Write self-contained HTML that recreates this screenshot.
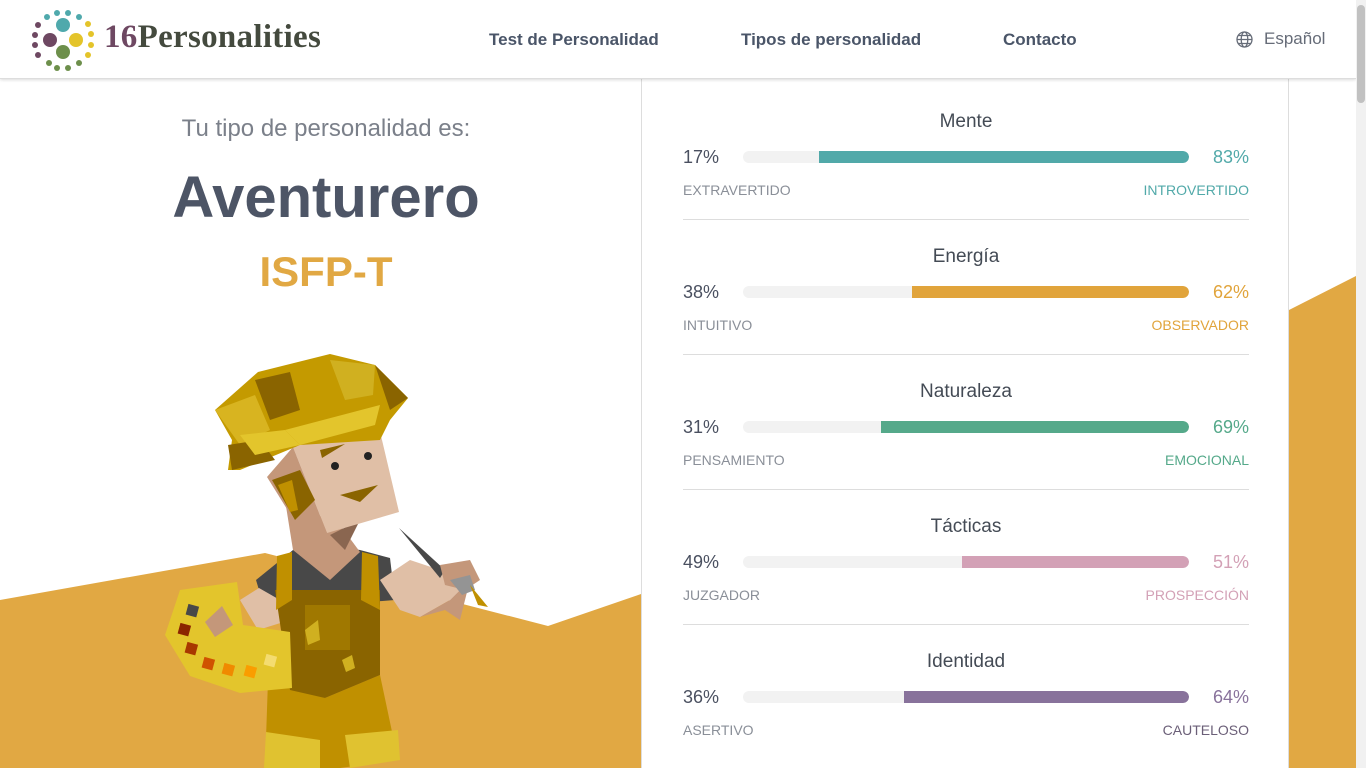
<!DOCTYPE html>
<html><head><meta charset="utf-8"><style>
*{margin:0;padding:0;box-sizing:border-box}
body{width:1366px;height:768px;overflow:hidden;background:#fff;font-family:"Liberation Sans",sans-serif;position:relative}
.hdr{position:absolute;left:0;top:0;width:1356px;height:79px;background:#fff;border-bottom:1px solid #ddd;box-shadow:0 1px 3px rgba(0,0,0,.15);z-index:5}
.nav{position:absolute;top:30px;font-size:17px;font-weight:bold;color:#4a5568}
.sb{position:absolute;right:0;top:0;width:10px;height:768px;background:#f1f1f1;z-index:6}
.sb div{position:absolute;left:1px;top:5px;width:8px;height:98px;background:#c1c1c1;border-radius:4px}
.panel{position:absolute;left:641px;top:79px;width:648px;height:689px;border-left:1px solid #ddd;border-right:1px solid #ddd;background:#fff}
.row{position:absolute;left:41px;width:566px;height:135px;border-bottom:1px solid #ddd}
.row h3{position:absolute;top:26px;width:100%;text-align:center;font-size:19px;font-weight:normal;color:#444b55}
.pl,.pr{position:absolute;top:62px;font-size:18px}
.pl{left:0;color:#4a5060}.pr{right:0}
.bar{position:absolute;left:60px;top:66px;width:446px;height:12px;background:#f2f2f2;border-radius:6px;overflow:hidden}
.bar div{position:absolute;top:0;right:0;height:12px;border-radius:0 6px 6px 0}
.ll,.lr{position:absolute;top:97px;font-size:14px}
.ll{left:0;color:#8a8f98}.lr{right:0}
</style></head><body>
<div class="hdr">
<svg style="position:absolute;left:30px;top:8px" width="66" height="64" viewBox="0 0 66 64">
<circle cx="33" cy="17" r="7" fill="#4fa9ac"/><circle cx="20" cy="32" r="7" fill="#6e4862"/><circle cx="46" cy="32" r="7" fill="#e4c42a"/><circle cx="33" cy="44" r="7" fill="#6d8f4b"/>
<g fill="#4fa9ac"><circle cx="27" cy="5" r="3"/><circle cx="38" cy="5" r="3"/><circle cx="49" cy="9" r="3"/><circle cx="17" cy="9" r="3"/></g>
<g fill="#6e4862"><circle cx="8" cy="17" r="3"/><circle cx="5" cy="27" r="3"/><circle cx="5" cy="37" r="3"/><circle cx="8" cy="47" r="3"/></g>
<g fill="#e4c42a"><circle cx="58" cy="16" r="3"/><circle cx="61" cy="26" r="3"/><circle cx="61" cy="37" r="3"/><circle cx="58" cy="47" r="3"/></g>
<g fill="#6d8f4b"><circle cx="19" cy="55" r="3"/><circle cx="27" cy="60" r="3"/><circle cx="38" cy="60" r="3"/><circle cx="49" cy="55" r="3"/></g>
</svg>
<div style="position:absolute;left:104px;top:19px;font-family:'Liberation Serif',serif;font-size:33px;font-weight:bold;color:#444a3e;letter-spacing:0.3px"><span style="color:#6e4862">16</span>Personalities</div>
<div class="nav" style="left:489px">Test de Personalidad</div>
<div class="nav" style="left:741px">Tipos de personalidad</div>
<div class="nav" style="left:1003px">Contacto</div>
<svg style="position:absolute;left:1236px;top:31px" width="17" height="17" viewBox="0 0 17 17" fill="none" stroke="#666c78" stroke-width="1.3"><circle cx="8.5" cy="8.5" r="7.5"/><ellipse cx="8.5" cy="8.5" rx="3.3" ry="7.5"/><path d="M1 8.5h15M2.5 4.5h12M2.5 12.5h12"/></svg>
<div style="position:absolute;left:1264px;top:29px;font-size:17px;color:#666c78">Español</div>
</div>
<div class="sb"><div></div></div>

<svg style="position:absolute;left:0;top:0" width="1366" height="768">
<polygon points="0,600 265,553 548,626 641,594 641,768 0,768" fill="#e1a843"/>
<polygon points="1289,310 1356,276 1356,768 1289,768" fill="#e1a843"/>
<polygon points="268,680 325,698 380,675 398,760 340,768 265,768" fill="#c09000"/>
<polygon points="266,732 320,740 320,768 264,768" fill="#e0c230"/>
<polygon points="345,735 398,730 400,760 350,768" fill="#e0c230"/>
<polygon points="293,550 330,545 360,550 390,558 395,600 265,610 256,580" fill="#484848"/>
<polygon points="259,588 280,600 290,620 258,630 240,600" fill="#e0bfa6"/>
<polygon points="380,580 410,560 440,570 470,580 450,600 420,617 400,610" fill="#e0bfa6"/>
<polygon points="420,617 450,600 470,580 460,620 445,610" fill="#c4977a"/>
<polygon points="399,528 445,570 440,578" fill="#484848"/>
<polygon points="440,565 470,560 480,580 465,590 445,585" fill="#c4977a"/>
<polygon points="450,580 470,575 475,590 462,595" fill="#949494"/>
<polygon points="470,585 488,607 478,605" fill="#c09000"/>
<polygon points="275,590 380,590 380,675 325,698 290,690" fill="#8a6400"/>
<polygon points="277,556 292,552 292,600 276,610" fill="#c09000"/>
<polygon points="362,552 378,556 380,610 361,600" fill="#c09000"/>
<rect x="305" y="605" width="45" height="45" fill="#a07800"/>
<polygon points="305,630 318,620 320,640 308,645" fill="#d0b020"/>
<polygon points="342,660 352,655 355,668 346,672" fill="#d0b020"/>
<polygon points="180,590 237,582 243,625 290,632 292,688 240,693 190,676 165,635" fill="#e3c52c"/>
<rect x="187" y="605" width="11" height="11" fill="#484848" transform="rotate(15 192 610)"/>
<rect x="179" y="624" width="11" height="11" fill="#8b2500" transform="rotate(15 184 629)"/>
<rect x="186" y="643" width="11" height="11" fill="#a83800" transform="rotate(15 191 648)"/>
<rect x="203" y="658" width="11" height="11" fill="#d05200" transform="rotate(15 208 663)"/>
<rect x="223" y="664" width="11" height="11" fill="#f08a00" transform="rotate(15 228 669)"/>
<rect x="245" y="666" width="11" height="11" fill="#fa9d00" transform="rotate(15 250 671)"/>
<rect x="265" y="655" width="11" height="11" fill="#f4dc70" transform="rotate(15 270 660)"/>
<polygon points="205,622 222,606 233,625 215,637" fill="#c4977a"/>
<polygon points="285,500 340,525 360,552 330,580 293,550" fill="#c4977a"/>
<polygon points="330,535 360,520 345,550" fill="#8a6650"/>
<polygon points="293,447 378,423 399,512 327,533" fill="#e0bfa6"/>
<polygon points="267,477 293,447 327,533 300,530" fill="#c4977a"/>
<polygon points="272,480 300,470 315,500 295,520" fill="#8a6400"/>
<polygon points="278,485 292,480 298,510 290,512" fill="#c09000"/>
<circle cx="335" cy="466" r="4" fill="#222"/><circle cx="368" cy="456" r="4" fill="#222"/>
<polygon points="340,495 378,485 360,502" fill="#8a6400"/>
<polygon points="320,450 345,444 322,458" fill="#8a6400"/>
<polygon points="215,410 258,372 330,354 375,365 408,398 390,420 380,440 300,445 240,470 228,470 232,440" fill="#c49a00"/>
<polygon points="255,380 290,372 300,410 270,420" fill="#8a6400"/>
<polygon points="330,360 375,365 373,395 345,400" fill="#d0b020"/>
<polygon points="215,410 255,395 270,430 240,445" fill="#d8b420"/>
<polygon points="228,445 260,440 275,460 232,470" fill="#8a6400"/>
<polygon points="285,430 380,405 375,425 300,445" fill="#e3c52c"/>
<polygon points="240,435 285,430 300,445 255,455" fill="#e3c52c"/>
<polygon points="375,365 408,398 390,410" fill="#8a6400"/>
</svg>

<div style="position:absolute;left:0;top:115px;width:652px;text-align:center;font-size:24px;color:#7b808a">Tu tipo de personalidad es:</div>
<div style="position:absolute;left:0;top:164px;width:652px;text-align:center;font-size:58px;font-weight:bold;color:#4d5566">Aventurero</div>
<div style="position:absolute;left:0;top:248px;width:652px;text-align:center;font-size:42px;font-weight:bold;color:#e1a843">ISFP-T</div>

<div class="panel">
<div class="row" style="top:6px"><h3>Mente</h3><span class="pl">17%</span><div class="bar"><div style="width:83%;background:#51a9a9"></div></div><span class="pr" style="color:#51a9a9">83%</span><span class="ll">EXTRAVERTIDO</span><span class="lr" style="color:#51a9a9">INTROVERTIDO</span></div>
<div class="row" style="top:141px"><h3>Energía</h3><span class="pl">38%</span><div class="bar"><div style="width:62%;background:#e1a43b"></div></div><span class="pr" style="color:#e1a43b">62%</span><span class="ll">INTUITIVO</span><span class="lr" style="color:#e1a43b">OBSERVADOR</span></div>
<div class="row" style="top:276px"><h3>Naturaleza</h3><span class="pl">31%</span><div class="bar"><div style="width:69%;background:#55a98a"></div></div><span class="pr" style="color:#55a98a">69%</span><span class="ll">PENSAMIENTO</span><span class="lr" style="color:#55a98a">EMOCIONAL</span></div>
<div class="row" style="top:411px"><h3>Tácticas</h3><span class="pl">49%</span><div class="bar"><div style="width:51%;background:#d3a1b6"></div></div><span class="pr" style="color:#d3a1b6">51%</span><span class="ll">JUZGADOR</span><span class="lr" style="color:#d3a1b6">PROSPECCIÓN</span></div>
<div class="row" style="top:546px;border:none"><h3>Identidad</h3><span class="pl">36%</span><div class="bar"><div style="width:64%;background:#88729b"></div></div><span class="pr" style="color:#88729b">64%</span><span class="ll">ASERTIVO</span><span class="lr" style="color:#6b5f78">CAUTELOSO</span></div>
</div>
</body></html>
